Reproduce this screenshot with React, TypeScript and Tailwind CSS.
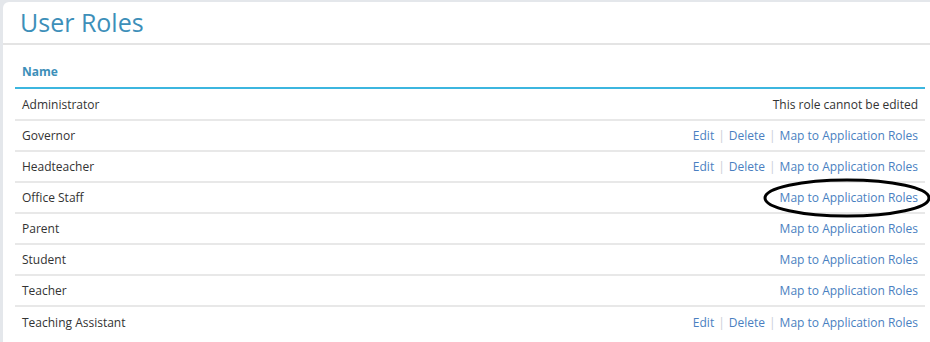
import React from "react";

type Row = { name: string; kind: "locked" | "full" | "map" };

const rows: Row[] = [
  { name: "Administrator", kind: "locked" },
  { name: "Governor", kind: "full" },
  { name: "Headteacher", kind: "full" },
  { name: "Office Staff", kind: "map" },
  { name: "Parent", kind: "map" },
  { name: "Student", kind: "map" },
  { name: "Teacher", kind: "map" },
  { name: "Teaching Assistant", kind: "full" },
];

function Sep() {
  return <span className="mx-[4px] text-[#c9ced6]">|</span>;
}

export default function App() {
  return (
    <div
      className="relative h-[342px] overflow-hidden bg-[#e4e7eb] pt-[2px] pl-[3px]"
      style={{ fontFamily: "'Open Sans', 'Liberation Sans', sans-serif" }}
    >
      <div className="h-full rounded-tl-[6px] bg-white">
        <div className="flex h-[43px] items-center border-b-2 border-[#e4e4e4] pl-[17px]">
          <h1 className="text-[25px] leading-none font-normal text-[#3d8fb9]">User Roles</h1>
        </div>
        <div className="pl-[12px] pr-[5px]">
          <div className="mb-[1px] flex h-[44px] items-end border-b-2 border-[#3cb6df] pb-[6px] pl-[7px]">
            <span className="text-[12px] font-bold text-[#3d8fb9]">Name</span>
          </div>
          {rows.map((r, i) => (
            <div
              key={r.name}
              className={`flex h-[31px] items-center justify-between px-[7px] text-[12px] ${
                i < rows.length - 1 ? "border-b-2 border-[#e8e8e8]" : ""
              }`}
            >
              <span className="text-[#333333]">{r.name}</span>
              {r.kind === "locked" ? (
                <span className="text-[#333333]">This role cannot be edited</span>
              ) : (
                <span className="text-[#4a7fc1]">
                  {r.kind === "full" && (
                    <>
                      <span>Edit</span>
                      <Sep />
                      <span>Delete</span>
                      <Sep />
                    </>
                  )}
                  <span>Map to Application Roles</span>
                </span>
              )}
            </div>
          ))}
        </div>
      </div>
      <svg
        className="absolute left-[762px] top-[178px]"
        width="172"
        height="42"
        viewBox="0 0 172 42"
      >
        <ellipse cx="85" cy="20" rx="82" ry="18" fill="none" stroke="#000" strokeWidth="3" />
      </svg>
    </div>
  );
}
